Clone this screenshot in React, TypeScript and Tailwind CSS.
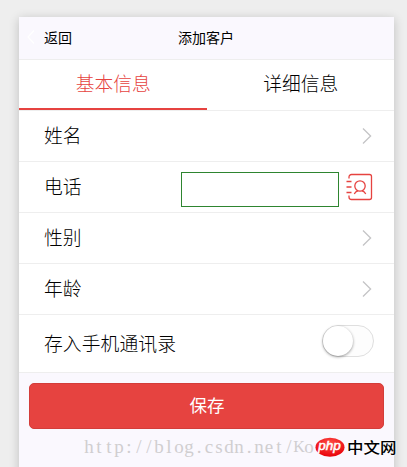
import { useState } from "react";

const fieldRows = ["姓名", "电话", "性别", "年龄"];

function Chevron() {
  return (
    <svg width="10" height="18" viewBox="0 0 10 18" fill="none" stroke="#c4c4c6" strokeWidth="1.3">
      <path d="M1 1.5 8.6 9 1 16.5" />
    </svg>
  );
}

function ContactIcon() {
  return (
    <svg width="28" height="28" viewBox="0 0 28 28" fill="none" stroke="#e64340" strokeWidth="1.3">
      <path d="M3 5.5V4a2.5 2.5 0 0 1 2.5-2.5h18A2 2 0 0 1 25.5 3.5v21a2 2 0 0 1-2 2h-18A2.5 2.5 0 0 1 3 24v-1.5" />
      <path d="M.5 8.5h5M.5 14h5M.5 19.5h5" />
      <circle cx="14" cy="13" r="5.2" />
      <path d="M8.3 21c.8-1.8 2-2.6 3.5-3.1M19.7 21c-.8-1.8-2-2.6-3.5-3.1" />
    </svg>
  );
}

function SiteLogo() {
  return (
    <div className="absolute left-[315px] top-[437px] flex h-5 items-center">
      <svg width="30" height="20" viewBox="0 0 30 20">
        <defs>
          <radialGradient id="oval" cx="50%" cy="30%" r="70%">
            <stop offset="0" stopColor="#ff5048" />
            <stop offset="1" stopColor="#e80008" />
          </radialGradient>
        </defs>
        <ellipse cx="15" cy="10.3" rx="14.5" ry="9.5" fill="url(#oval)" />
        <text x="14.5" y="13" textAnchor="middle" fill="#fff" stroke="#fff" strokeWidth="0.5" fontSize="13.5" fontStyle="italic" fontFamily="Liberation Sans, sans-serif">php</text>
      </svg>
      <span className="ml-0.5 origin-center scale-y-90 whitespace-nowrap text-[16.5px] font-medium leading-5 text-black [text-shadow:0_0_2px_#fff,0_0_2px_#fff]">
        中文网
      </span>
    </div>
  );
}

// Every character sits in a cell of the same width
function Watermark({ text }: { text: string }) {
  return (
    <div className="absolute left-[84px] top-[436px] flex font-['Liberation_Serif',serif] text-[19px] leading-[22px] text-[#d0ced0]">
      {text.split("").map((char, i) => (
        <span key={i} className={`flex w-[10px] justify-center ${char === "K" ? "text-[16px]" : ""}`}>
          {char}
        </span>
      ))}
    </div>
  );
}

export default function App() {
  const [tab, setTab] = useState(0);
  const [phone, setPhone] = useState("");
  const [saveContact, setSaveContact] = useState(false);

  return (
    <div className="relative h-[467px] w-[407px] overflow-hidden bg-[#eee] pl-[19px] pt-[17px] font-['Noto_Sans_CJK_SC',sans-serif] text-black">
      <div className="h-[460px] w-[375px] bg-[#faf8fe] shadow-[0_2px_10px_rgba(0,0,0,0.2)]">
        <header className="flex h-[43px] items-center border-b border-[#eee] pb-0.5 text-sm">
          <button className="flex w-[159px] items-center gap-[9px] pl-2">
            <svg width="8" height="14" viewBox="0 0 8 14" fill="none" stroke="#fff" strokeWidth="1.2">
              <path d="M7 .5 1 7l6 6.5" />
            </svg>
            返回
          </button>
          <h1>添加客户</h1>
        </header>

        <nav className="flex h-[51px] border-b border-[#eee] bg-white text-[18.75px] font-light">
          {["基本信息", "详细信息"].map((label, i) => (
            <button
              key={label}
              onClick={() => setTab(i)}
              className={`w-1/2 border-b-2 pb-0.5 pl-px ${tab === i ? "border-[#e64340] text-[#e64340]" : "border-transparent"}`}
            >
              {label}
            </button>
          ))}
        </nav>

        <main className="bg-white text-[18.75px] font-light tracking-[0.12px]">
          {fieldRows.map((label) => (
            <div key={label} className="flex h-[51px] items-center justify-between border-b border-[#eee] pl-[25px] pr-[22px]">
              <label className="pb-0.5">{label}</label>
              {label === "电话" ? (
                <div className="-mr-0.5 flex items-center gap-[7px] pt-1">
                  <input
                    value={phone}
                    onChange={(e) => setPhone(e.target.value)}
                    className="h-[35px] w-[158px] border border-[#2e8530] px-2 outline-none"
                  />
                  <div className="-mt-1"><ContactIcon /></div>
                </div>
              ) : (
                <Chevron />
              )}
            </div>
          ))}
          <div className="flex h-[58px] items-center justify-between border-b border-[#eee] pl-[25px] pr-5">
            <span className="pb-px">存入手机通讯录</span>
            <button
              onClick={() => setSaveContact(!saveContact)}
              className={`mb-[5px] flex h-8 w-[52px] rounded-full border border-[#dfdfdf] bg-[#fdfdfd] ${saveContact ? "justify-end" : ""}`}
            >
              <span className="size-[30px] rounded-full bg-white shadow-[0_1px_3px_rgba(0,0,0,0.4)]" />
            </button>
          </div>
        </main>

        <div className="px-[10px] pt-[10px]">
          <button className="h-[46px] w-full rounded-[5px] border border-[#d33d3a] bg-[#e64340] pb-0.5 pl-px text-[17.5px] text-white">
            保存
          </button>
        </div>
      </div>

      <Watermark text="http://blog.csdn.net/Ko" />
      <SiteLogo />
    </div>
  );
}
